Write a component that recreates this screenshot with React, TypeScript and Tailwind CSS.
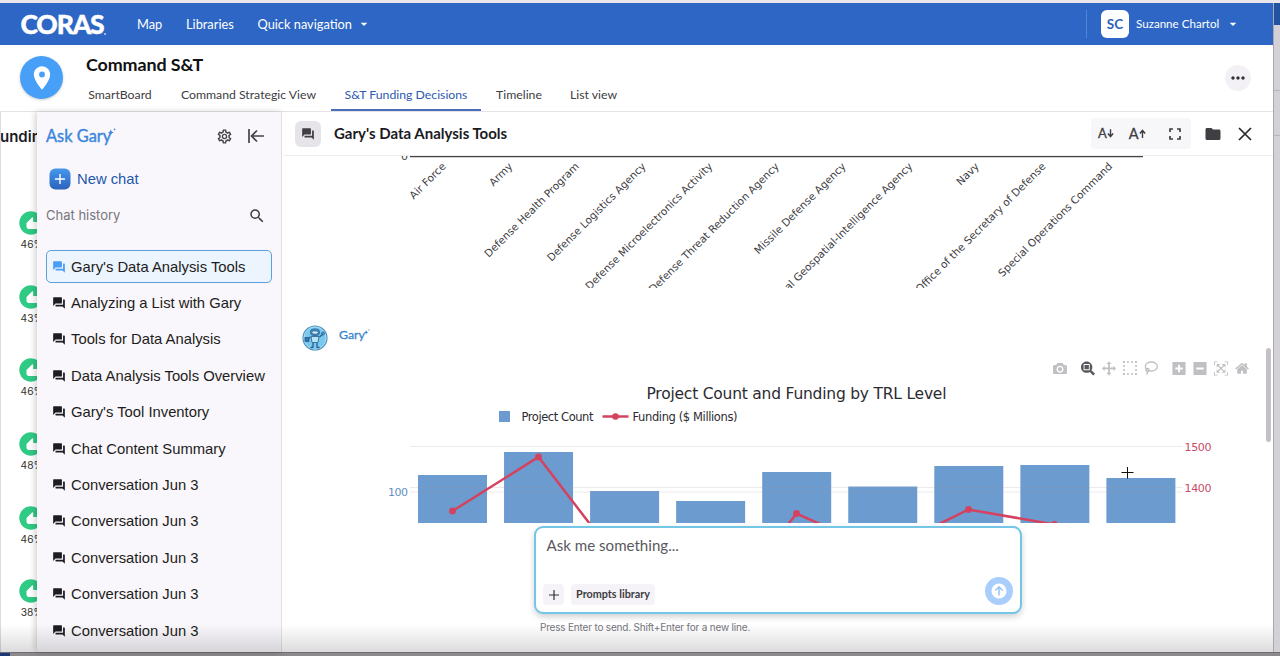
import React from 'react';
import { MdForum, MdSearch, MdLocationOn, MdFolder, MdArrowDropDown, MdMoreHoriz, MdOutlineSettings } from 'react-icons/md';

interface NavTab {
  label: string;
  active?: boolean;
  className: string;
}

const tabs: NavTab[] = [
  { label: 'SmartBoard', className: 'w-[84px]' },
  { label: 'Command Strategic View', className: 'w-[169px] pl-1' },
  { label: 'S&T Funding Decisions', active: true, className: 'w-[150px]' },
  { label: 'Timeline', className: 'w-[76px]' },
  { label: 'List view', className: 'w-[73px]' },
];

const chats = [
  "Gary's Data Analysis Tools",
  'Analyzing a List with Gary',
  'Tools for Data Analysis',
  'Data Analysis Tools Overview',
  "Gary's Tool Inventory",
  'Chat Content Summary',
  'Conversation Jun 3',
  'Conversation Jun 3',
  'Conversation Jun 3',
  'Conversation Jun 3',
  'Conversation Jun 3',
];

const scores = ['46%', '43%', '46%', '48%', '46%', '38%'];

const agencies = [
  'Air Force',
  'Army',
  'Defense Health Program',
  'Defense Logistics Agency',
  'Defense Microelectronics Activity',
  'Defense Threat Reduction Agency',
  'Missile Defense Agency',
  'National Geospatial-Intelligence Agency',
  'Navy',
  'Office of the Secretary of Defense',
  'Special Operations Command',
];

// bar tops, in chart pixels
const barTops = [95, 72, 111, 121, 92, 106.5, 86, 85, 98];

const fundingPoints: [number, number][] = [
  [169.5, 131],
  [255.5, 77],
  [341.5, 189],
  [427.5, 244],
  [513.5, 133.5],
  [599.5, 172],
  [685.5, 129.5],
  [771.5, 144.5],
  [857.5, 230],
];

const modeIcons = {
  camera: 'm500 450c-83 0-150-67-150-150 0-83 67-150 150-150 83 0 150 67 150 150 0 83-67 150-150 150z m400 150h-120c-16 0-34 13-39 29l-31 93c-6 15-23 28-40 28h-340c-16 0-34-13-39-28l-31-94c-6-15-23-28-40-28h-120c-55 0-100-45-100-100v-450c0-55 45-100 100-100h800c55 0 100 45 100 100v450c0 55-45 100-100 100z m-400-550c-138 0-250 112-250 250 0 138 112 250 250 250 138 0 250-112 250-250 0-138-112-250-250-250z m365 380c-19 0-35 16-35 35 0 19 16 35 35 35 19 0 35-16 35-35 0-19-16-35-35-35z',
  zoom: 'm1000-25l-250 251c40 63 63 138 63 218 0 224-182 406-407 406-224 0-406-182-406-406s183-406 407-406c80 0 155 22 218 62l250-250 125 125z m-812 250l0 438 437 0 0-438-437 0z m62 375l313 0 0-312-313 0 0 312z',
  pan: 'm1000 350l-187 188 0-125-250 0 0 250 125 0-188 187-187-187 125 0 0-250-250 0 0 125-188-188 186-187 0 125 252 0 0-250-125 0 187-188 188 188-125 0 0 250 250 0 0-126 187 188z',
  plus: 'm1 787l0-875 875 0 0 875-875 0z m687-500l-187 0 0-187-125 0 0 187-188 0 0 125 188 0 0 187 125 0 0-187 187 0 0-125z',
  minus: 'm0 788l0-876 875 0 0 876-875 0z m688-500l-500 0 0 125 500 0 0-125z',
  autoscale: 'm250 850l-187 0-63 0 0-62 0-188 63 0 0 188 187 0 0 62z m688 0l-188 0 0-62 188 0 0-188 62 0 0 188 0 62-62 0z m-875-938l0 188-63 0 0-188 0-62 63 0 187 0 0 62-187 0z m875 188l0-188-188 0 0-62 188 0 62 0 0 62 0 188-62 0z m-125 188l-1 0-93-94-156 156 156 156 92-93 2 0 0 250-250 0 0-2 93-92-156-156-156 156 94 92 0 2-250 0 0-250 0 0 93 93 157-156-157-156-93 94 0 0 0-250 250 0 0 0-94 93 156 157 156-157-93-93 0 0 250 0 0 250z',
  home: 'm786 296v-267q0-15-11-26t-25-10h-214v214h-143v-214h-214q-15 0-25 10t-11 26v267q0 1 0 2t0 2l321 264 321-264q1-1 1-4z m124 39l-34-41q-5-5-12-6h-2q-7 0-12 3l-386 322-386-322q-7-4-13-4-7 2-12 7l-35 41q-4 5-3 13t6 12l401 334q18 15 42 15t43-15l136-114v109q0 8 5 13t13 5h107q8 0 13-5t5-13v-227l122-102q5-5 6-12t-4-13z',
};

const ModeIcon: React.FC<{ d: string; box?: number; className?: string }> = ({ d, box = 1000, className = '' }) => (
  <svg viewBox={`0 0 ${box} 1000`} className={`h-[15px] w-[14px] ${className}`} fill="currentColor">
    <path d={d} transform="matrix(1 0 0 -1 0 850)" />
  </svg>
);

const Sparkle: React.FC<{ className?: string }> = ({ className = '' }) => (
  <svg viewBox="0 0 10 10" className={className} fill="currentColor">
    <path d="M3.5 1.5 4.5 4.500 7.5 5.5 4.5 6.500 3.5 9.5 2.5 6.500 0 5.5 2.5 4.500z" />
    <path d="M8.3 0 8.8 1.200 10 1.7 8.8 2.200 8.3 3.4 7.8 2.200 6.6 1.7 7.8 1.200z" />
  </svg>
);

const TopBar: React.FC = () => (
  <header className="flex h-[42px] shrink-0 items-center bg-[#2d66c5] text-[12.8px] text-white">
    <div className="ml-[20.500px] flex w-[116.500px] items-end">
      <span className="text-[26.5px] leading-[38px] font-black tracking-[-1.2px] [-webkit-text-stroke:0.4px_white]">CORAS</span>
      <span className="mb-[8px] ml-px size-[2px] rounded-full bg-white/70" />
    </div>
    <span className="mt-px w-[49px]">Map</span>
    <span className="mt-px w-[71.5px]">Libraries</span>
    <span className="mt-px w-[98px]">Quick navigation</span>
    <MdArrowDropDown size={16} />
    <div className="ml-auto flex h-[28px] items-center border-l border-[#5484d4] pl-[14px]">
      <span className="mr-[7px] flex size-[28px] items-center justify-center rounded-md bg-white text-[13.5px] font-bold text-[#2d62b8]">
        SC
      </span>
      <span className="w-[89px] text-[11.6px]">Suzanne Chartol</span>
      <MdArrowDropDown size={16} className="mr-8" />
    </div>
  </header>
);

const PageHeader: React.FC = () => (
  <div className="flex h-[67px] shrink-0 border-b border-[#e4e2e8] bg-white">
    <div className="mt-[11px] ml-[20px] flex size-[43px] items-center justify-center rounded-full bg-[#489ff8] shadow-[0_1px_3px_rgba(0,0,0,0.2)]">
      <MdLocationOn size={28} className="text-white" />
    </div>
    <div className="ml-[15px] flex flex-col">
      <h1 className="mt-[7px] ml-[8px] h-[24px] text-[17.9px] leading-6 font-bold tracking-[-0.1px] text-[#111]">Command S&amp;T</h1>
      <nav className="mt-auto flex h-[31px] text-[12.25px] leading-[29px] text-[#3d3c42]">
        {tabs.map((tab) => (
          <div
            key={tab.label}
            className={`text-center whitespace-nowrap ${tab.className} ${tab.active ? 'border-b-2 border-[#4a6fb8] text-[#2d5ab0]' : ''}`}
          >
            {tab.label}
          </div>
        ))}
      </nav>
    </div>
    <button className="mt-[20px] mr-[22px] ml-auto flex size-[26px] items-center justify-center rounded-full bg-[#f3f1f5] text-[#333]">
      <MdMoreHoriz size={20} />
    </button>
  </div>
);

const ScoreColumn: React.FC = () => (
  <div className="w-[37px] shrink-0 overflow-hidden border-l border-[#dddbe2] bg-white">
    <p className="-ml-px h-[99px] pt-[16px] font-[Inter,sans-serif] text-[15px] leading-[18px] font-semibold whitespace-nowrap text-[#1b1b1f]">undin</p>
    {scores.map((score, i) => (
      <div key={i} className="ml-[18px] flex h-[73.7px] w-6 flex-col items-center">
        <svg viewBox="0 0 24 24" className="size-6 shrink-0">
          <circle cx="12" cy="12" r="11.7" fill="#2fca83" />
          <path d="M7.500 12 13 6.500q1.300-.6 1.200 1V11H19q1.500.3 1.300 2L19 17q-.3 1-1.500 1H9.500q-2-.3-2-2z" fill="#fff" />
        </svg>
        <span className="mt-px ml-[2px] font-[Inter,sans-serif] text-[10.2px] leading-4 text-[#333]">{score}</span>
      </div>
    ))}
  </div>
);

const Sidebar: React.FC = () => (
  <aside className="relative flex w-[245px] shrink-0 flex-col overflow-hidden rounded-bl border-r border-[#e2e0e6] bg-[#f9f7fb] shadow-[-2px_0_6px_rgba(0,0,0,0.18)]">
    <div className="flex h-[48px] items-center pl-[9px] text-[#3c86dc]">
      <span className="text-[16.4px] [-webkit-text-stroke:0.4px_#3c86dc]">Ask Gary</span>
      <Sparkle className="mb-[9px] -ml-[3px] size-[8px]" />
      <MdOutlineSettings size={17} className="mr-[14px] ml-auto text-[#444348]" />
      <svg viewBox="0 0 18 16" className="mr-4 h-4 w-[18px]" fill="none" stroke="#444348" strokeWidth="1.7">
        <path d="M2 1v14M17 8H4.500M10 2.500 4.500 8l5.500 5.500" />
      </svg>
    </div>
    <button className="mt-[8px] ml-[12px] flex h-[22px] items-center gap-[6px] font-['Liberation_Sans',sans-serif] text-[14.8px] text-[#2458ad]">
      <svg viewBox="0 0 22 22" className="size-[22px]">
        <defs>
          <linearGradient id="newChat" x1="0" y1="0" x2="0" y2="1">
            <stop offset="0" stopColor="#4598ee" />
            <stop offset="1" stopColor="#2c62bc" />
          </linearGradient>
        </defs>
        <rect x=".5" y=".5" width="21" height="21" rx="6" fill="url(#newChat)" />
        <path d="M11 6v10M6 11h10" stroke="#fff" strokeWidth="1.400" />
      </svg>
      New chat
    </button>
    <div className="mt-[16px] flex h-[20px] items-center justify-between pr-[15px] pl-[9px] font-[Inter,sans-serif] text-[13px] text-[#77757d]">
      Chat history
      <MdSearch size={18} className="text-[#3c3b40]" />
    </div>
    <ul className="mt-[22.500px] pl-[9px] font-['Liberation_Sans',sans-serif] text-[14.8px] text-[#1d1c21]">
      {chats.map((chat, i) => (
        <li key={i} className="flex h-[36.4px] items-center">
          <div
            className={`flex h-[33px] w-[226px] items-center gap-[5px] rounded-[5px] border pl-[5px] whitespace-nowrap ${
              i === 0 ? 'border-[#5aa0dc] bg-[#ecf4fe]' : 'border-transparent'
            }`}
          >
            <MdForum size={14} className={i === 0 ? 'text-[#4a9cf5]' : 'text-[#1d1c21]'} />
            {chat}
          </div>
        </li>
      ))}
    </ul>
  </aside>
);

const ChatHeader: React.FC = () => (
  <div className="flex h-[44px] shrink-0 items-center border-b border-[#eeecf1] pl-[12px] text-[#3f3e43]">
    <div className="flex size-[26px] items-center justify-center rounded-md bg-[#e6e4e8]">
      <MdForum size={14} />
    </div>
    <h2 className="ml-[13px] text-[15px] font-bold text-[#1b1b1f]">Gary's Data Analysis Tools</h2>
    <div className="mr-[13px] ml-auto flex h-[31px] w-[100px] items-center rounded bg-[#f7f6f9]">
      <span className="ml-[7px] text-[13px] [-webkit-text-stroke:0.3px_#3f3e43]">A</span>
      <svg viewBox="0 0 8 10" className="h-[9px] w-[7px]" fill="none" stroke="currentColor" strokeWidth="1.600">
        <path d="M4 0v8.500M1 5l3 3.500L7 5" />
      </svg>
      <span className="ml-[15px] text-[14.5px] [-webkit-text-stroke:0.3px_#3f3e43]">A</span>
      <svg viewBox="0 0 8 10" className="h-[9px] w-[7px]" fill="none" stroke="currentColor" strokeWidth="1.600">
        <path d="M4 10V1.500M1 5l3-3.500L7 5" />
      </svg>
      <svg viewBox="0 0 12 12" className="ml-[23px] size-[12px]" fill="none" stroke="currentColor" strokeWidth="1.700">
        <path d="M1 4V1h3M8 1h3v3M11 8v3H8M4 11H1V8" />
      </svg>
    </div>
    <MdFolder size={18} className="mr-[16px]" />
    <svg viewBox="0 0 14 14" className="mr-[21px] size-[14px]" fill="none" stroke="#29282c" strokeWidth="1.700">
      <path d="m1 1 12 12M13 1 1 13" />
    </svg>
  </div>
);

const AgencyAxis: React.FC = () => (
  <svg className="block h-[132px] w-[983px] shrink-0 overflow-hidden" viewBox="0 0 983 132" fontFamily="'DejaVu Sans', Verdana, sans-serif" fill="#3d3c42">
    <path d="M127 .5H860" stroke="#444" strokeWidth="1.400" />
    <text x="125" y="4" fontSize="11" textAnchor="end">0</text>
    {agencies.map((agency, i) => {
      const x = 163.5 + i * 66.65;
      return (
        <text key={agency} x={x} y="11" fontSize="10.500" textAnchor="end" transform={`rotate(-45 ${x} 11)`}>
          {agency}
        </text>
      );
    })}
  </svg>
);

const GaryAvatar: React.FC = () => (
  <svg viewBox="0 0 26 26" className="size-[26px]">
    <circle cx="13" cy="13" r="12" fill="#79c9ef" stroke="#5295bb" strokeWidth="1.200" />
    <circle cx="13" cy="13" r="11" fill="none" stroke="#b9e4f7" strokeWidth=".7" />
    <g stroke="#285f8c" strokeWidth=".8">
      <rect x="8.500" y="4" width="9" height="6.500" rx="3" fill="#4a94c8" />
      <rect x="10" y="6" width="6" height="3" rx="1.200" fill="#d9f1fc" />
      <path d="M9 11.500h8l-1 6h-6z" fill="#b8e2f6" />
      <path d="M8.500 12 4.500 15.500M17.500 12l3.500-3M11 18v4M15 18v4M8.500 22.500h3M14.500 22.500h3" fill="none" strokeWidth="1.300" />
      <rect x="3" y="12.500" width="4" height="4" fill="#2f78b4" />
      <circle cx="21" cy="8.500" r="1.500" fill="#4a94c8" />
    </g>
  </svg>
);

const ModeBar: React.FC = () => (
  <div className="mr-[24px] ml-auto flex h-[16px] items-center text-[#c0bfc3]">
    <ModeIcon d={modeIcons.camera} />
    <ModeIcon d={modeIcons.zoom} className="ml-[14px] text-[#59585e]" />
    <ModeIcon d={modeIcons.pan} className="ml-[7px]" />
    <svg viewBox="0 0 14 14" className="ml-[7px] size-[14px]" fill="none" stroke="currentColor" strokeWidth="1.600">
      <path d="M0 1h14M0 13h14M1 0v14M13 0v14" strokeDasharray="2 2" />
    </svg>
    <svg viewBox="0 0 14 14" className="ml-[7px] size-[14px]" fill="none" stroke="currentColor" strokeWidth="1.300">
      <ellipse cx="7.300" cy="5.500" rx="6" ry="4.500" />
      <circle cx="3.500" cy="9" r="1.600" />
      <path d="M3.500 10.500q.3 1.800-1 3" />
    </svg>
    <ModeIcon d={modeIcons.plus} box={875} className="ml-[14px]" />
    <ModeIcon d={modeIcons.minus} box={875} className="ml-[7px]" />
    <ModeIcon d={modeIcons.autoscale} className="ml-[7px]" />
    <ModeIcon d={modeIcons.home} box={928} className="ml-[7px]" />
  </div>
);

const TrlChart: React.FC = () => (
  <svg className="block h-[143px] w-[983px] shrink-0 overflow-hidden" viewBox="0 0 983 143" fontFamily="'DejaVu Sans', Verdana, sans-serif" fill="#2c2b31">
    <text x="363.500" y="18.500" fontSize="15.500" textLength="300">Project Count and Funding by TRL Level</text>
    <rect x="216" y="31" width="11" height="11" fill="#6c9bcf" />
    <text x="238.500" y="40.500" fontSize="11.500" textLength="72">Project Count</text>
    <path d="M319.500 36.500h26" stroke="#d5425f" strokeWidth="2.500" />
    <circle cx="332.500" cy="36.500" r="3.300" fill="#d5425f" />
    <text x="349.500" y="40.500" fontSize="11.500" textLength="105">Funding ($ Millions)</text>

    {barTops.map((top, i) => (
      <rect key={i} x={135 + i * 86.05} y={top} width="69" height={143 - top} fill="#6c9bcf" />
    ))}
    <path d="M127 66.500h773M127 107.500h773M127 112h773" stroke="#9b9aa5" strokeOpacity=".2" />
    <polyline points={fundingPoints.map((p) => p.join(',')).join(' ')} fill="none" stroke="#d5425f" strokeWidth="2.500" />
    {fundingPoints.map(([x, y]) => (
      <circle key={x} cx={x} cy={y} r="3.400" fill="#d5425f" />
    ))}
    <text x="105" y="116" fontSize="11" textLength="20" fill="#6590c4">100</text>
    <text x="901.500" y="71" fontSize="11" textLength="27" fill="#c84b68">1500</text>
    <text x="901.500" y="112" fontSize="11" textLength="27" fill="#c84b68">1400</text>
    <path d="M844.500 87v11.500M838.500 92.500h12" stroke="#111" strokeWidth="1" />
  </svg>
);

const PromptBox: React.FC = () => (
  <div className="mt-[3px] ml-[251px] w-[488px]">
    <div className="flex h-[88px] flex-col rounded-[9px] border-2 border-[#73c6e6] bg-white px-[7px] shadow-[0_3px_6px_rgba(0,0,0,0.18)]">
      <p className="mt-[5px] ml-[3.500px] text-[15.1px] leading-6 text-[#5a595e]">Ask me something...</p>
      <div className="mt-auto mb-[7px] flex items-end">
        <button className="flex size-[21px] items-center justify-center rounded bg-[#f5f3f7]">
          <svg viewBox="0 0 10 10" className="size-[10px]" stroke="#333" strokeWidth="1.200">
            <path d="M5 0v10M0 5h10" />
          </svg>
        </button>
        <button className="ml-[7px] h-[21px] w-[84px] rounded bg-[#f5f3f7] text-[10.8px] font-bold text-[#3d3c42]">Prompts library</button>
        <div className="ml-auto flex size-[28px] items-center justify-center rounded-full bg-[#a9cefb]">
          <svg viewBox="0 0 16 16" className="size-4">
            <circle cx="8" cy="8" r="7.500" fill="#fff" />
            <path d="M8 12.500V4M4.300 7.500 8 3.900l3.700 3.600" fill="none" stroke="#9cc6fa" strokeWidth="1.600" />
          </svg>
        </div>
      </div>
    </div>
    <p className="mt-[5px] ml-[6px] font-[Inter,sans-serif] text-[10px] leading-4 tracking-[-0.19px] whitespace-nowrap text-[#77757d]">
      Press Enter to send. Shift+Enter for a new line.
    </p>
  </div>
);

const ChatPane: React.FC = () => (
  <main className="relative flex min-w-0 flex-1 flex-col overflow-hidden bg-white pl-px">
    <ChatHeader />
    <AgencyAxis />
    <div className="mt-[37px] ml-[19px] flex h-[26px] shrink-0 text-[#3683cc]">
      <GaryAvatar />
      <span className="ml-[11px] text-[12.3px] leading-5 [-webkit-text-stroke:0.3px_#3683cc]">Gary</span>
      <Sparkle className="mt-[4px] -ml-px size-[6px]" />
    </div>
    <div className="mt-[9px] flex h-[20px] shrink-0">
      <ModeBar />
    </div>
    <TrlChart />
    <PromptBox />
    <div className="absolute top-[236px] right-[2px] h-[94px] w-[5px] rounded-full bg-[#c3c1c5]" />
  </main>
);

const App: React.FC = () => {
  return (
    <div className="flex h-[656px] w-[1280px] flex-col overflow-hidden bg-[#e9e7ec] pt-[3px] font-[Lato,sans-serif]">
      <div className="flex h-[649px] shrink-0">
        <div className="relative flex w-[1273px] flex-col bg-white">
          <TopBar />
          <PageHeader />
          <div className="flex min-h-0 flex-1">
            <ScoreColumn />
            <Sidebar />
            <ChatPane />
          </div>
          <div className="pointer-events-none absolute inset-x-0 bottom-0 h-[28px] bg-linear-to-b from-transparent to-black/14" />
        </div>
        <div className="flex w-[7px] flex-col border-l border-[#aaa8ae] bg-[#d3d1d6]">
          <div className="h-[22px] bg-[#2352a0]" />
          <div className="h-[66px] border-b border-[#b9b7bd]" />
          <div className="h-[45px] border-b border-[#b9b7bd]" />
        </div>
      </div>
      <div className="flex h-1 shrink-0 border-t border-[#6f6d72] bg-[#8b898c]">
        <div className="w-[10px] bg-[#1d3774]" />
      </div>
    </div>
  );
};

export default App;
